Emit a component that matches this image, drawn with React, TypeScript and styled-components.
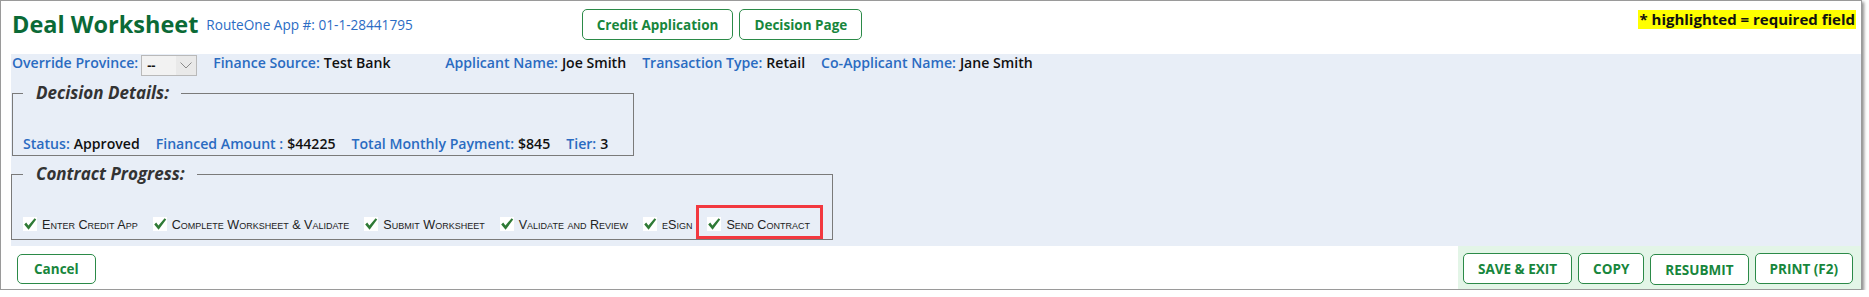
import React from 'react';
import styled, { createGlobalStyle } from 'styled-components';

const GlobalStyle = createGlobalStyle`
  body {
    margin: 0;
    background: #fff;
    font-family: 'Open Sans', 'Noto Sans', sans-serif;
  }
`;

const Frame = styled.div`
  width: 1862px;
  height: 290px;
  box-sizing: border-box;
  border: 1px solid #9a9a9a;
  box-shadow: 2px 2px 3px rgba(0, 0, 0, 0.45);
  background: #fff;
  display: flex;
  flex-direction: column;
`;

const Header = styled.div`
  height: 53px;
  display: flex;
  align-items: flex-start;
  padding: 0 5px 0 11px;
`;

const Title = styled.h1`
  margin: 8px 0 0;
  font-size: 23.5px;
  line-height: 30px;
  font-weight: 700;
  color: #0b6a36;
`;

const AppNumber = styled.span`
  margin: 14px 0 0 8px;
  font-size: 13.6px;
  line-height: 19px;
  color: #2b6cc4;
`;

const NavButtons = styled.div`
  display: flex;
  gap: 6px;
  margin: 8px 0 0 169px;
`;

const Button = styled.button<{ $drop?: boolean }>`
  height: 31px;
  box-sizing: border-box;
  margin-top: ${(p) => (p.$drop ? '1px' : '0')};
  padding: 0 14px;
  border: 1px solid #2b8a48;
  border-radius: 5px;
  background: #fff;
  color: #17863c;
  font-family: 'Open Sans', sans-serif;
  font-size: 13.5px;
  font-weight: 700;
  cursor: pointer;
`;

const Required = styled.span`
  margin: 9px 0 0 auto;
  padding: 0 1px;
  background: #ffff00;
  color: #111;
  font-size: 15px;
  line-height: 19px;
  font-weight: 700;
`;

const Panel = styled.div`
  margin-left: 10px;
  height: 192px;
  box-sizing: border-box;
  background: #e8eef7;
  display: flex;
  flex-direction: column;
`;

const InfoRow = styled.div`
  display: flex;
  align-items: flex-start;
  padding-left: 1px;
  height: 22px;
`;

const Field = styled.div<{ $width?: number }>`
  display: flex;
  gap: 4px;
  margin-right: 16px;
  width: ${(p) => (p.$width ? `${p.$width}px` : 'auto')};
  font-size: 14.1px;
  line-height: 18px;
  font-weight: 600;
  white-space: nowrap;
`;

const Label = styled.span`
  color: #2a6bc1;
`;

const Value = styled.span`
  color: #111;
`;

const FakeSelect = styled.div`
  display: flex;
  width: 56px;
  height: 21px;
  box-sizing: border-box;
  margin: 1px 16px 0 3px;
  border: 1px solid #b9b9b9;
  background: #f2f2f2;
  font-size: 13px;
  font-weight: 700;
  color: #111;
`;

const SelectText = styled.span`
  flex: 1;
  padding-left: 5px;
  line-height: 18px;
`;

const SelectArrow = styled.span`
  width: 20px;
  display: flex;
  align-items: center;
  justify-content: center;
  background: #e9e9e9;
`;

const Group = styled.fieldset<{ $width: number; $left: number; $top: number; $padLeft: number }>`
  width: ${(p) => p.$width}px;
  box-sizing: border-box;
  min-width: 0;
  margin: ${(p) => p.$top}px 0 0 ${(p) => p.$left}px;
  padding: 0 10px 1px ${(p) => p.$padLeft}px;
  border: 1px solid #7a7a7a;
`;

const Legend = styled.legend`
  padding: 0 12px 0 13px;
  font-size: 17px;
  line-height: 22px;
  font-style: italic;
  font-weight: 700;
  color: #333;
`;

const StatusRow = styled.div`
  display: flex;
  padding-top: 30px;
  & > div {
    line-height: 20px;
  }
`;

const ProgressRow = styled.div`
  display: flex;
  gap: 15px;
  padding-top: 20px;
  margin-bottom: -1px;
`;

const Step = styled.div<{ $highlight?: boolean }>`
  display: flex;
  align-items: flex-end;
  gap: 5px;
  height: 34px;
  box-sizing: border-box;
  padding-bottom: ${(p) => (p.$highlight ? '3px' : '6px')};
  ${(p) =>
    p.$highlight &&
    `
    border: 3px solid #f2383f;
    padding-left: 8px;
    padding-right: 10px;
    margin-left: -11px;
  `}
`;

const StepText = styled.span`
  font-family: 'Liberation Sans', Arial, sans-serif;
  font-size: 12.6px;
  line-height: 15px;
  font-variant: small-caps;
  color: #222;
  white-space: nowrap;
`;

const CheckBox = styled.svg`
  flex: none;
  margin-bottom: 2px;
`;

const BottomBar = styled.div`
  flex: 1;
  display: flex;
  align-items: stretch;
`;

const CancelWrap = styled.div`
  padding: 8px 0 0 16px;
`;

const CancelButton = styled(Button)`
  height: 30px;
  padding: 0 16px;
`;

const ActionGroup = styled.div`
  margin-left: auto;
  display: flex;
  align-items: flex-start;
  gap: 6px;
  padding: 7px 8px 0 5px;
  background: #e3f5e7;
`;

const Check = () => (
  <CheckBox width="14" height="14" viewBox="0 0 14 14">
    <rect width="14" height="14" fill="#fff" />
    <path d="M1.2 7.4 L3.2 5.6 L5.4 8.6 L11.6 1.2 L13.2 2.6 L5.6 12.8 Z" fill="#2f7a36" />
  </CheckBox>
);

const steps = [
  'Enter Credit App',
  'Complete Worksheet & Validate',
  'Submit Worksheet',
  'Validate and Review',
  'eSign',
  'Send Contract',
];

const App: React.FC = () => {
  return (
    <>
      <GlobalStyle />
      <Frame>
        <Header>
          <Title>Deal Worksheet</Title>
          <AppNumber>RouteOne App #: 01-1-28441795</AppNumber>
          <NavButtons>
            <Button>Credit Application</Button>
            <Button>Decision Page</Button>
          </NavButtons>
          <Required>* highlighted = required field</Required>
        </Header>

        <Panel>
          <InfoRow>
            <Field style={{ marginRight: 0 }}>
              <Label>Override Province:</Label>
            </Field>
            <FakeSelect>
              <SelectText>--</SelectText>
              <SelectArrow>
                <svg width="12" height="7" viewBox="0 0 12 7">
                  <path d="M0.5 0.5 L6 6 L11.5 0.5" fill="none" stroke="#8a8a8a" strokeWidth="1" />
                </svg>
              </SelectArrow>
            </FakeSelect>
            <Field $width={216}>
              <Label>Finance Source:</Label>
              <Value>Test Bank</Value>
            </Field>
            <Field>
              <Label>Applicant Name:</Label>
              <Value>Joe Smith</Value>
            </Field>
            <Field>
              <Label>Transaction Type:</Label>
              <Value>Retail</Value>
            </Field>
            <Field>
              <Label>Co-Applicant Name:</Label>
              <Value>Jane Smith</Value>
            </Field>
          </InfoRow>

          <Group $width={622} $left={1} $top={6} $padLeft={10}>
            <Legend>Decision Details:</Legend>
            <StatusRow>
              <Field>
                <Label>Status:</Label>
                <Value>Approved</Value>
              </Field>
              <Field>
                <Label>Financed Amount :</Label>
                <Value>$44225</Value>
              </Field>
              <Field>
                <Label>Total Monthly Payment:</Label>
                <Value>$845</Value>
              </Field>
              <Field>
                <Label>Tier:</Label>
                <Value>3</Value>
              </Field>
            </StatusRow>
          </Group>

          <Group $width={822} $left={0} $top={7} $padLeft={11}>
            <Legend>Contract Progress:</Legend>
            <ProgressRow>
              {steps.map((s, i) => (
                <Step key={s} $highlight={i === steps.length - 1}>
                  <Check />
                  <StepText>{s}</StepText>
                </Step>
              ))}
            </ProgressRow>
          </Group>
        </Panel>

        <BottomBar>
          <CancelWrap>
            <CancelButton>Cancel</CancelButton>
          </CancelWrap>
          <ActionGroup>
            <Button>SAVE &amp; EXIT</Button>
            <Button>COPY</Button>
            <Button $drop>RESUBMIT</Button>
            <Button>PRINT (F2)</Button>
          </ActionGroup>
        </BottomBar>
      </Frame>
    </>
  );
};

export default App;
